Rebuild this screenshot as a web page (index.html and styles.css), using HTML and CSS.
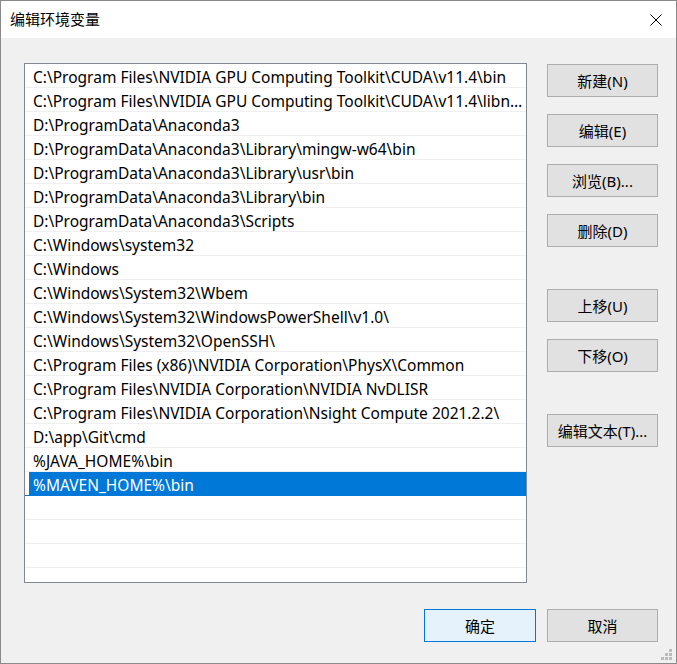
FILE: index.html
```html
<!DOCTYPE html>
<html lang="zh-CN">
<head>
<meta charset="utf-8">
<title>编辑环境变量</title>
<link rel="stylesheet" href="styles.css">
</head>
<body>
<div class="window">
  <div class="titlebar">
    <span class="title">编辑环境变量</span>
    <span class="close">
      <svg width="12" height="12" viewBox="0 0 12 12"><path d="M0.5 0.5 L11.5 11.5 M11.5 0.5 L0.5 11.5" stroke="#000" stroke-width="1" fill="none"/></svg>
    </span>
  </div>
  <div class="body">
    <div class="main">
      <div class="list">
        <div class="row"><span class="cell">C:\Program Files\NVIDIA GPU Computing Toolkit\CUDA\v11.4\bin</span></div>
        <div class="row"><span class="cell">C:\Program Files\NVIDIA GPU Computing Toolkit\CUDA\v11.4\libnvvp</span></div>
        <div class="row"><span class="cell">D:\ProgramData\Anaconda3</span></div>
        <div class="row"><span class="cell">D:\ProgramData\Anaconda3\Library\mingw-w64\bin</span></div>
        <div class="row"><span class="cell">D:\ProgramData\Anaconda3\Library\usr\bin</span></div>
        <div class="row"><span class="cell">D:\ProgramData\Anaconda3\Library\bin</span></div>
        <div class="row"><span class="cell">D:\ProgramData\Anaconda3\Scripts</span></div>
        <div class="row"><span class="cell">C:\Windows\system32</span></div>
        <div class="row"><span class="cell">C:\Windows</span></div>
        <div class="row"><span class="cell">C:\Windows\System32\Wbem</span></div>
        <div class="row"><span class="cell">C:\Windows\System32\WindowsPowerShell\v1.0\</span></div>
        <div class="row"><span class="cell">C:\Windows\System32\OpenSSH\</span></div>
        <div class="row"><span class="cell">C:\Program Files (x86)\NVIDIA Corporation\PhysX\Common</span></div>
        <div class="row"><span class="cell">C:\Program Files\NVIDIA Corporation\NVIDIA NvDLISR</span></div>
        <div class="row"><span class="cell">C:\Program Files\NVIDIA Corporation\Nsight Compute 2021.2.2\</span></div>
        <div class="row"><span class="cell">D:\app\Git\cmd</span></div>
        <div class="row"><span class="cell">%JAVA_HOME%\bin</span></div>
        <div class="row selected"><span class="cell">%MAVEN_HOME%\bin</span></div>
        <div class="row"><span class="cell"></span></div>
        <div class="row"><span class="cell"></span></div>
        <div class="row"><span class="cell"></span></div>
        <div class="row"><span class="cell"></span></div>
      </div>
      <div class="side">
        <div class="group">
          <button class="btn">新建(N)</button>
          <button class="btn">编辑(E)</button>
          <button class="btn">浏览(B)...</button>
          <button class="btn">删除(D)</button>
        </div>
        <div class="group">
          <button class="btn">上移(U)</button>
          <button class="btn">下移(O)</button>
        </div>
        <div class="group">
          <button class="btn">编辑文本(T)...</button>
        </div>
      </div>
    </div>
    <div class="footer">
      <button class="btn default">确定</button>
      <button class="btn">取消</button>
    </div>
    <div class="grip">
      <i class="d1"></i><i class="d2"></i><i class="d3"></i><i class="d4"></i><i class="d5"></i><i class="d6"></i>
    </div>
  </div>
</div>
</body>
</html>
```
FILE: styles.css
```css
* { box-sizing: border-box; }
html, body { margin: 0; padding: 0; }
body {
  font-family: "Noto Sans", "Noto Sans CJK SC", sans-serif;
  font-size: 15px;
  color: #000;
  background: #f0f0f0;
}
.window {
  width: 677px;
  height: 664px;
  border: 1px solid #8a8a8a;
  background: #f0f0f0;
  display: flex;
  flex-direction: column;
  position: relative;
}
.titlebar {
  height: 37px;
  background: #fff;
  display: flex;
  align-items: center;
  justify-content: space-between;
  padding: 0 14px 0 9px;
}
.title {
  font-family: "Noto Sans CJK SC", sans-serif;
  font-size: 15px;
  line-height: 20px;
  padding-bottom: 2px;
}
.close { display: flex; width: 12px; height: 12px; }
.body {
  flex: 1;
  padding: 25px 18px 0 23px;
  display: flex;
  flex-direction: column;
}
.main {
  display: flex;
  gap: 19px;
}
.list {
  width: 504px;
  height: 520px;
  border: 1px solid #828790;
  background: #fff;
  overflow: hidden;
}
.row {
  height: 24px;
  border-bottom: 1px solid #efefef;
  display: flex;
}
.cell {
  flex: 1;
  min-width: 0;
  margin-left: 4px;
  padding: 3px 1px 0 4px;
  font-size: 15.5px;
  line-height: 20px;
  white-space: nowrap;
  overflow: hidden;
  text-overflow: ellipsis;
}
.row.selected { border-bottom-color: #0078d7; }
.row.selected .cell {
  background: #0078d7;
  color: #fff;
}
.side {
  padding-top: 1px;
  padding-left: 1px;
  display: flex;
  flex-direction: column;
  gap: 42px;
}
.group {
  display: flex;
  flex-direction: column;
  gap: 17px;
}
.btn {
  width: 111px;
  height: 33px;
  background: #e1e1e1;
  border: 1px solid #adadad;
  font-family: "Noto Sans", "Noto Sans CJK SC", sans-serif;
  font-size: 15px;
  color: #000;
  padding: 0;
  margin: 0;
}
.footer {
  margin-top: 26px;
  display: flex;
  justify-content: flex-end;
  gap: 11px;
}
.btn.default {
  width: 112px;
  background: #e5f1fb;
  border-color: #0078d7;
}
.grip {
  position: absolute;
  right: 4px;
  bottom: 3px;
  width: 11px;
  height: 11px;
}
.grip i {
  position: absolute;
  width: 3px;
  height: 3px;
  background: #bcbcbc;
}
.grip .d1 { right: 0; top: 0; }
.grip .d2 { right: 0; top: 4px; }
.grip .d3 { right: 4px; top: 4px; }
.grip .d4 { right: 0; top: 8px; }
.grip .d5 { right: 4px; top: 8px; }
.grip .d6 { right: 8px; top: 8px; }
```
